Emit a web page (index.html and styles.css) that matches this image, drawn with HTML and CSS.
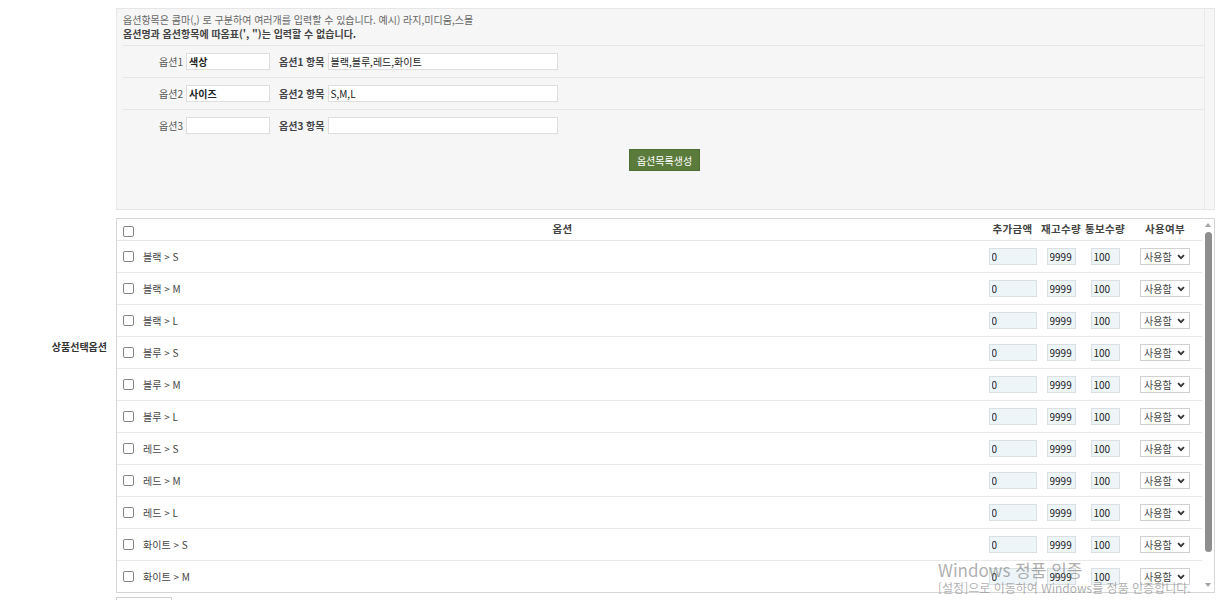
FILE: index.html
```html
<!DOCTYPE html>
<html lang="ko">
<head>
    <meta charset="UTF-8">
    <meta name="viewport" content="width=device-width, initial-scale=1.0">
    <title>상품옵션 등록</title>
    <link rel="stylesheet" href="styles.css">
</head>
<body>

    <div class="page">
        <!-- 옵션 입력 영역 -->
        <div class="form-row">
            <div class="row-label"></div>
            <div class="row-body">
                <div class="option-panel">
                    <div class="option-inner">
                        <p class="guide">옵션항목은 콤마(,) 로 구분하여 여러개를 입력할 수 있습니다. 예시) 라지,미디움,스몰</p>
                        <p class="guide strong">옵션명과 옵션항목에 따옴표(', ")는 입력할 수 없습니다.</p>

                        <div class="option-line">
                            <label class="opt-name" for="opt1">옵션1</label>
                            <input type="text" class="opt-input bold" id="opt1" value="색상">
                            <label class="opt-item" for="opt1Item">옵션1 항목</label>
                            <input type="text" class="opt-items" id="opt1Item" value="블랙,블루,레드,화이트">
                        </div>
                        <div class="option-line">
                            <label class="opt-name" for="opt2">옵션2</label>
                            <input type="text" class="opt-input bold" id="opt2" value="사이즈">
                            <label class="opt-item" for="opt2Item">옵션2 항목</label>
                            <input type="text" class="opt-items" id="opt2Item" value="S,M,L">
                        </div>
                        <div class="option-line">
                            <label class="opt-name" for="opt3">옵션3</label>
                            <input type="text" class="opt-input" id="opt3">
                            <label class="opt-item" for="opt3Item">옵션3 항목</label>
                            <input type="text" class="opt-items" id="opt3Item">
                        </div>

                        <div class="btn-area">
                            <button type="button" class="btn-make">옵션목록생성</button>
                        </div>
                    </div>
                </div>
            </div>
        </div>

        <!-- 옵션 목록 -->
        <div class="form-row">
            <div class="row-label strong-label">상품선택옵션</div>
            <div class="row-body">
                <div class="option-list">
                    <div class="list-scroll">
                        <table class="option-table">
                            <colgroup>
                                <col class="c-check">
                                <col>
                                <col class="c-price">
                                <col class="c-stock">
                                <col class="c-notice">
                                <col class="c-use">
                            </colgroup>
                            <thead>
                                <tr>
                                    <th class="check"><input type="checkbox" class="chk"></th>
                                    <th>옵션</th>
                                    <th>추가금액</th>
                                    <th>재고수량</th>
                                    <th>통보수량</th>
                                    <th>사용여부</th>
                                </tr>
                            </thead>
                            <tbody id="optionRows"></tbody>
                        </table>
                    </div>
                    <!-- 스크롤바 -->
                    <div class="scrollbar">
                        <svg class="sb-arrow" width="12" height="12" viewBox="0 0 12 12"><path d="M3 8 L6 4 L9 8 Z" fill="#a3a3a3"/></svg>
                        <div class="sb-thumb"></div>
                        <svg class="sb-arrow" width="12" height="12" viewBox="0 0 12 12"><path d="M3 4 L6 8 L9 4 Z" fill="#a3a3a3"/></svg>
                    </div>
                </div>
                <div class="bottom-btn"></div>
            </div>
        </div>
    </div>

    <div class="win-mark">
        <div class="win-title">Windows 정품 인증</div>
        <div class="win-sub">[설정]으로 이동하여 Windows를 정품 인증합니다.</div>
    </div>

    <script>
        // 옵션 조합 목록 만들기
        const colors = ['블랙', '블루', '레드', '화이트'];
        const sizes = ['S', 'M', 'L'];
        const tbody = document.getElementById('optionRows');

        colors.forEach(function(color) {
            sizes.forEach(function(size) {
                const tr = document.createElement('tr');
                tr.innerHTML =
                    '<td class="check"><input type="checkbox" class="chk"></td>' +
                    '<td class="name">' + color + ' &gt; ' + size + '</td>' +
                    '<td><input type="text" class="num price" value="0"></td>' +
                    '<td><input type="text" class="num small" value="9999"></td>' +
                    '<td><input type="text" class="num small" value="100"></td>' +
                    '<td><div class="sel-wrap"><select class="use-select"><option>사용함</option><option>사용안함</option></select>' +
                    '<svg class="sel-arrow" width="8" height="6" viewBox="0 0 8 6"><path d="M1 1.2 L4 4.2 L7 1.2" fill="none" stroke="#333" stroke-width="1.8"/></svg></div></td>';
                tbody.appendChild(tr);
            });
        });
    </script>

</body>
</html>
```

FILE: styles.css
```css
body {
    margin: 0;
    font-family: "Noto Sans CJK KR", "Noto Sans", sans-serif;
    font-size: 10px;
    color: #444;
    background-color: #fff;
}
.page {
    padding-top: 8px;
}
.form-row {
    display: grid;
    grid-template-columns: 116px 1099px;
    margin-bottom: 8px;
}
.row-label {
    text-align: right;
    padding-right: 9px;
}
.strong-label {
    font-weight: bold;
    color: #333;
    line-height: 14px;
    padding-top: 122px;
}
.option-panel {
    height: 200px;
    background-color: #f6f6f6;
    border: 1px solid #e6e6e6;
    padding: 0 9px 0 6px;
}
.option-inner {
    height: 100%;
    border-right: 1px solid #e9e9e9;
}
.guide {
    margin: 0;
    line-height: 14px;
    color: #666;
}
.guide:first-child {
    padding-top: 4px;
}
.guide.strong {
    font-weight: bold;
    color: #444;
    margin-bottom: 4px;
}
.option-line {
    display: flex;
    align-items: center;
    height: 31px;
    border-top: 1px solid #e6e6e6;
}
.option-line:last-of-type {
    border-bottom: 1px solid #e6e6e6;
}
.opt-name {
    width: 60px;
    margin-right: 3px;
    text-align: right;
    color: #555;
}
.opt-item {
    margin: 0 3px 0 9px;
    font-weight: bold;
    color: #444;
}
input[type="text"] {
    box-sizing: border-box;
    height: 17px;
    margin: 0;
    padding: 0 2px;
    border: 1px solid #dedede;
    font-family: inherit;
    font-size: 10px;
    color: #222;
    background-color: #fff;
    outline: none;
}
.opt-input {
    width: 84px;
}
.opt-items {
    width: 230px;
}
.bold {
    font-weight: bold;
}
.btn-area {
    text-align: center;
    padding-top: 8px;
}
.btn-make {
    width: 71px;
    height: 22px;
    margin-left: 2px;
    padding: 0;
    background-color: #5b7b3c;
    border: 1px solid #4f6d33;
    color: #fff;
    font-family: inherit;
    font-size: 10px;
    cursor: pointer;
}
.option-list {
    display: flex;
    height: 373px;
    border: 1px solid #d6d6d6;
}
.list-scroll {
    flex: 1;
    overflow: hidden;
}
.scrollbar {
    width: 12px;
    display: flex;
    flex-direction: column;
    align-items: center;
    background-color: #fff;
}
.sb-arrow {
    display: block;
    flex: none;
}
.sb-thumb {
    width: 7px;
    height: 320px;
    margin: 1px 0 auto;
    background-color: #8e8e8e;
    border-radius: 4px;
}
.sb-arrow:last-child {
    margin-bottom: 1px;
}
.option-table {
    width: 100%;
    border-collapse: collapse;
    table-layout: fixed;
}
.c-check { width: 23px; }
.c-price { width: 55px; }
.c-stock { width: 42px; }
.c-notice { width: 46px; }
.c-use { width: 74px; }
.option-table th {
    height: 18px;
    padding: 0 0 2px;
    line-height: 14px;
    font-size: 10.5px;
    letter-spacing: 0.3px;
    font-weight: bold;
    color: #444;
    border-bottom: 1px solid #e6e6e6;
    text-align: center;
}
.option-table td {
    height: 31px;
    padding: 0;
    border-bottom: 1px solid #e9e9e9;
    text-align: center;
}
.option-table .check {
    text-align: left;
    padding-left: 6px;
}
.option-table th.check {
    padding-top: 3px;
    padding-bottom: 0;
}
.option-table td.name {
    text-align: left;
    padding-left: 3px;
    color: #444;
}
.chk {
    appearance: none;
    display: block;
    width: 11px;
    height: 11px;
    margin: 0;
    border: 1px solid #888;
    border-radius: 2px;
    background-color: #fff;
}
.num {
    background-color: #eef5f8 !important;
    border-color: #dadfe2 !important;
    color: #333;
}
.price {
    width: 48px;
}
.small {
    width: 29px;
}
.sel-wrap {
    position: relative;
    display: inline-block;
    width: 50px;
    height: 17px;
    vertical-align: middle;
}
.use-select {
    appearance: none;
    box-sizing: border-box;
    width: 50px;
    height: 17px;
    margin: 0;
    padding: 0 0 0 3px;
    border: 1px solid #d0d0d0;
    background-color: #fff;
    font-family: inherit;
    font-size: 10px;
    color: #444;
    outline: none;
}
.sel-arrow {
    position: absolute;
    right: 5px;
    top: 6px;
    pointer-events: none;
}
.bottom-btn {
    width: 54px;
    height: 20px;
    margin-top: 4px;
    border: 1px solid #cfcfcf;
}
.win-mark {
    position: absolute;
    left: 938px;
    top: 559px;
    color: rgba(120, 120, 120, 0.6);
    pointer-events: none;
}
.win-title {
    font-size: 17px;
    line-height: 22px;
}
.win-sub {
    font-size: 12px;
    line-height: 14px;
}
```
